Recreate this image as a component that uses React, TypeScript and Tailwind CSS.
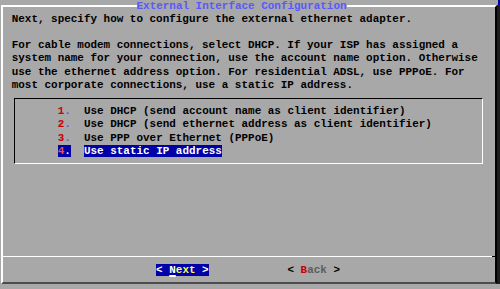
import React from "react";

const items = [
  "Use DHCP (send account name as client identifier)",
  "Use DHCP (send ethernet address as client identifier)",
  "Use PPP over Ethernet (PPPoE)",
];

function MenuRow({ n, label, active }: { n: number; label: string; active?: boolean }) {
  if (active) {
    return (
      <p>
        <span className="bg-[#0000a8]">
          <span className="text-[#e85050]">{n}</span>
          <span className="text-white">.</span>
        </span>
        {"  "}
        <span className="bg-[#0000a8] text-white">{label}</span>
      </p>
    );
  }
  return (
    <p>
      <span className="text-[#c80000]">{n}</span>
      <span className="text-[#5454fc]">.</span>
      {"  "}
      {label}
    </p>
  );
}

export default function App() {
  return (
    <div className="relative w-[500px] h-[289px] overflow-hidden bg-[#a8a8a8] font-['Liberation_Mono',monospace] text-[10.95px] leading-[13.2px] font-bold text-black">
      {/* screen background + shadow on the right */}
      <div className="absolute top-0 right-0 w-[2px] h-[5px] bg-[#0000a8]" />
      <div className="absolute top-[5px] right-0 w-[3px] h-[279px] bg-[#1c1c1c]" />

      <div className="relative ml-[1px] mt-[5px] w-[496px] h-[279px] border-2 border-white border-r-black border-b-[#4c4c4c]">
        <span className="absolute left-[133.5px] top-[-7.4px] bg-[#a8a8a8] text-[#5858fc] whitespace-pre">
          External Interface Configuration
        </span>

        <div className="pt-[5.8px] pl-[8.7px] whitespace-pre">
          <p>Next, specify how to configure the external ethernet adapter.</p>
          <p>&nbsp;</p>
          <p>For cable modem connections, select DHCP. If your ISP has assigned a</p>
          <p>system name for your connection, use the account name option. Otherwise</p>
          <p>use the ethernet address option. For residential ADSL, use PPPoE. For</p>
          <p>most corporate connections, use a static IP address.</p>
        </div>

        <div className="ml-[11px] mt-[6px] w-[469px] border border-black border-r-white border-b-white pt-[6.2px] pb-[5px] pl-[42.7px] whitespace-pre">
          {items.map((label, i) => (
            <MenuRow key={label} n={i + 1} label={label} />
          ))}
          <MenuRow n={4} label="Use static IP address" active />
        </div>

        <div className="mt-[92px] flex h-px">
          <div className="flex-1 bg-white" />
          <div className="w-[3px] bg-black" />
        </div>

        <p className="mt-[6.6px] pl-[8.7px] whitespace-pre">
          {"                      "}
          <span className="bg-[#0000a8] text-white">
            {"< "}
            <span className="underline decoration-2 underline-offset-[2px] decoration-white">N</span>
            <span className="text-[#fcfc54]">ext</span>
            {" >"}
          </span>
          {"            "}
          <span>
            {"< "}
            <span className="text-[#c80000]">B</span>
            <span className="text-[#5c5c5c]">ack</span>
            {" >"}
          </span>
        </p>
      </div>
    </div>
  );
}
